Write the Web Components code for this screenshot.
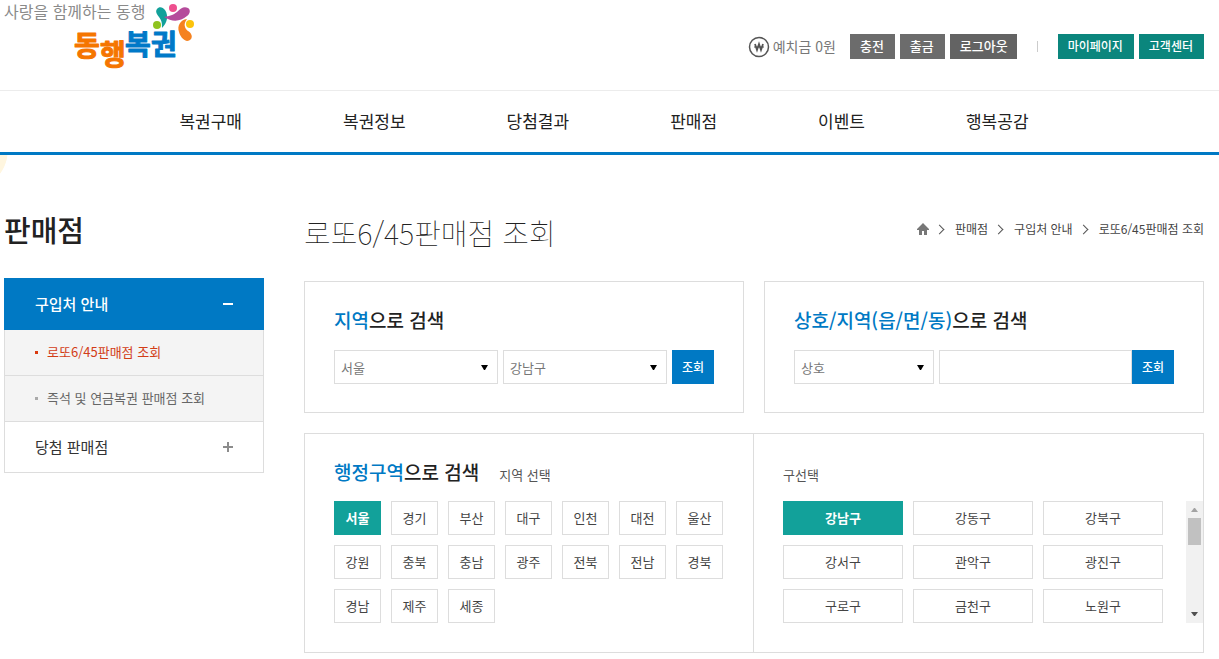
<!DOCTYPE html>
<html lang="ko">
<head>
<meta charset="utf-8">
<meta name="viewport" content="width=device-width, initial-scale=1">
<title>로또6/45판매점 조회 | 동행복권</title>
<style>
  body { margin: 0; background: #fff; color: #222; font-family: "Noto Sans CJK KR", "Noto Sans", sans-serif; font-size: 13px; }
</style>
</head>
<body>
<lottery-page></lottery-page>
<script>
const define = (name, html, setup) => {
  const template = document.createElement('template');
  template.innerHTML = `<style>
    :host { display: block; }
    *, ::before, ::after { box-sizing: border-box; }
    button, input, select { font: inherit; margin: 0; border-radius: 0; }
    button { cursor: pointer; padding: 0 0 2px; }
    a { color: inherit; text-decoration: none; }
    h1, h2, h3, ul, ol { margin: 0; padding: 0; list-style: none; font-weight: 400; }
    svg { display: block; }
  </style>` + html;
  customElements.define(name, class extends HTMLElement {
    constructor() {
      super();
      this.attachShadow({ mode: 'open' }).append(template.content.cloneNode(true));
    }
    connectedCallback() { if (setup) setup(this, this.shadowRoot); }
  });
};

define('site-logo', `
<style>
  :host { width: 200px; }
  a { display: block; }
  text { font-family: "Noto Sans CJK KR", sans-serif; }
  .mark { font-size: 28px; font-weight: 700; stroke-width: 1; stroke-linejoin: round; }
</style>
<a href="#" aria-label="사랑을 함께하는 동행 동행복권">
  <svg width="200" height="76" viewBox="0 0 200 76">
    <text x="0" y="18" font-size="16" fill="#8a8a8a">사랑을 함께하는 동행</text>
    <text class="mark" y="56" fill="#f57500" stroke="#f57500"><tspan x="70">동</tspan><tspan x="96" y="65">행</tspan></text>
    <text class="mark" y="55" fill="#0079c8" stroke="#0079c8" x="121 147">복권</text>
    <circle cx="153" cy="25" r="4" fill="#8fc31f"/>
    <path d="M153 9c2-3 6-2 8 1 4 6 2 13-3 18 0-5 0-7-3-11-2-3-4-5-2-8z" fill="#12a19a"/>
    <circle cx="169" cy="8" r="4" fill="#ee4f8e"/>
    <path d="M160 17c6-1 9-2 13-5 4-4 7-6 11-4 3 2 2 6-1 8-7 6-15 6-23 1z" fill="#b54b9b"/>
    <circle cx="186" cy="24" r="4" fill="#fcc30b"/>
    <path d="M183 19c-7 1-10 7-8 13 1 4 4 8 8 9 4 0 6-4 4-7-1-3-5-3-6-7-1-3 0-5 2-8z" fill="#f58220"/>
  </svg>
</a>`);

define('util-bar', `
<style>
  :host { display: flex; align-items: center; }
  .balance { display: flex; align-items: center; gap: 3px; margin-right: 14px; font-size: 14px; line-height: 20px; color: #777; }
  .balance span { padding-bottom: 2px; }
  .group { display: flex; gap: 5px; }
  a.btn { display: block; padding: 0 11px 2px 10px; line-height: 23px; font-size: 13px; font-weight: 500; color: #fff; background: #6c6c6c; white-space: nowrap; }
  a.dark { background: #636363; padding: 0 9px 2px 10px; }
  .teal a.btn { background: #0b867d; font-size: 12px; }
  .bar { width: 1px; height: 11px; background: #ccc; margin: 0 20px; }
</style>
<div class="balance">
  <svg width="22" height="22" viewBox="0 0 22 22" fill="none" stroke="#555"><circle cx="11" cy="11" r="9.5" stroke-width="1.5"/><path d="M7 8l2 6 2-6 2 6 2-6" stroke-width="1.8"/><path d="M6 11h10"/></svg>
  <span>예치금 0원</span>
</div>
<div class="group"><a class="btn" href="#">충전</a><a class="btn" href="#">출금</a><a class="btn dark" href="#">로그아웃</a></div>
<span class="bar"></span>
<div class="group teal"><a class="btn" href="#">마이페이지</a><a class="btn" href="#">고객센터</a></div>`);

define('site-header', `
<style>
  .top { display: flex; justify-content: space-between; align-items: flex-start; height: 90px; padding: 0 15px 0 4px; }
  util-bar { margin-top: 34px; }
  nav { border-top: 1px solid #ececec; border-bottom: 3px solid #0079c4; }
  ul { display: flex; justify-content: center; gap: 101px; padding-right: 11px; }
  a { display: block; font-size: 17px; line-height: 60px; padding-bottom: 1px; color: #222; white-space: nowrap; }
</style>
<header>
  <div class="top"><site-logo></site-logo><util-bar></util-bar></div>
  <nav aria-label="주 메뉴"><ul>
    <li><a href="#">복권구매</a></li><li><a href="#">복권정보</a></li><li><a href="#">당첨결과</a></li>
    <li><a href="#">판매점</a></li><li><a href="#">이벤트</a></li><li><a href="#">행복공감</a></li>
  </ul></nav>
</header>`);

define('side-menu', `
<style>
  :host { width: 260px; flex: none; }
  h2 { font-size: 29px; font-weight: 500; line-height: 38px; margin: 0 0 30px; color: #222; }
  .top { display: flex; justify-content: space-between; align-items: center; height: 52px; padding: 0 31px; font-size: 15px; }
  .top span, .sub span { padding-bottom: 2px; }
  .open { background: #0079c4; color: #fff; font-weight: 500; }
  .closed { height: 51px; padding: 0 30px; border: 1px solid #ddd; border-top: 0; color: #333; }
  .sub a { display: flex; align-items: center; gap: 9px; height: 46px; padding: 0 30px; border: 1px solid #ddd; border-top: 0; background: #f4f4f4; color: #666; }
  .sub a::before { content: ""; width: 3px; height: 3px; background: #aaa; }
  .sub a[aria-current] { color: #d23d17; }
  .sub a[aria-current]::before { background: #d93a0e; }
</style>
<nav aria-label="판매점 메뉴">
  <h2>판매점</h2>
  <a class="top open" href="#"><span>구입처 안내</span><svg width="10" height="10"><path d="M0 5h10" stroke="#fff" stroke-width="2"/></svg></a>
  <ul class="sub"><li><a href="#" aria-current="page"><span>로또6/45판매점 조회</span></a></li><li><a href="#"><span>즉석 및 연금복권 판매점 조회</span></a></li></ul>
  <a class="top closed" href="#"><span>당첨 판매점</span><svg width="10" height="10"><path d="M0 5h10M5 0v10" stroke="#8c8c8c" stroke-width="2"/></svg></a>
</nav>`);

define('bread-crumb', `
<style>
  ol { display: flex; align-items: center; font-size: 12px; line-height: 38px; color: #444; }
  li { display: flex; align-items: center; white-space: nowrap; }
  li + li::before { content: ""; width: 7px; height: 7px; border: solid #555; border-width: 1px 1px 0 0; transform: rotate(45deg); margin: 0 12px 0 7px; }
</style>
<nav aria-label="현재 위치"><ol>
  <li><a href="#" aria-label="홈"><svg width="12" height="12" viewBox="0 0 12 12"><path d="M6 0l6 6v1h-2v5H7V8H5v4H2V7H0V6z" fill="#777"/></svg></a></li>
  <li><a href="#">판매점</a></li><li><a href="#">구입처 안내</a></li><li><a href="#" aria-current="page">로또6/45판매점 조회</a></li>
</ol></nav>`);

define('drop-down', `
<style>
  :host { display: grid; height: 34px; min-width: 0; }
  select { grid-area: 1 / 1; width: 100%; height: 34px; padding: 0 6px; border: 1px solid #ddd; background: #fff; color: #777; appearance: none; }
  svg { grid-area: 1 / 1; justify-self: end; align-self: center; margin-right: 10px; pointer-events: none; }
</style>
<select><option></option></select>
<svg width="7" height="5" viewBox="0 0 7 5"><path d="M0 0h7L4 5H3z" fill="#000"/></svg>`,
(host, root) => {
  root.querySelector('select').setAttribute('aria-label', host.getAttribute('label'));
  root.querySelector('option').textContent = host.getAttribute('value');
});

define('search-card', `
<style>
  :host { border: 1px solid #ddd; padding: 24px 29px 28px; box-sizing: border-box; }
  h3 { font-size: 19px; font-weight: 500; line-height: 28px; margin-bottom: 16px; color: #222; }
  .accent { color: #0079c4; }
  form { display: flex; gap: 5px; }
  .go { flex: none; width: 42px; height: 34px; border: 0; background: #0079c4; color: #fff; font-size: 12px; font-weight: 500; }
</style>
<h3><span class="accent"><slot name="accent"></slot></span><slot name="rest"></slot></h3>
<form><slot></slot><button class="go" type="button">조회</button></form>`);

define('keyword-box', `
<style>
  :host { flex: 1; min-width: 0; margin-right: -5px; }
  input { display: block; width: 100%; height: 34px; padding: 0 8px; border: 1px solid #ddd; background: #fff; outline: 0; }
</style>
<input type="text" aria-label="상호 또는 지역 검색어">`);

define('choice-grid', `
<style>
  :host { flex: 1; min-width: 0; }
  div { display: grid; gap: 10px; grid-template-columns: repeat(var(--columns, 3), minmax(0, 1fr)); }
  button { height: 34px; border: 1px solid #ddd; background: #fff; color: #444; font-size: 13px; }
  button[aria-pressed=true] { border-color: #12a19a; background: #12a19a; color: #fff; font-weight: 700; }
</style>
<div role="group"></div>`,
(host, root) => {
  const group = root.querySelector('div');
  group.setAttribute('aria-label', host.getAttribute('label'));
  group.replaceChildren(...host.getAttribute('items').split(' ').map((name, i) => {
    const button = document.createElement('button');
    button.type = 'button';
    button.textContent = name;
    button.setAttribute('aria-pressed', i === 0);
    button.onclick = () => group.querySelectorAll('button').forEach(b => b.setAttribute('aria-pressed', b === button));
    return button;
  }));
});

define('scroll-rail', `
<style>
  :host { display: flex; flex-direction: column; align-items: center; width: 17px; flex: none; background: #f1f1f1; box-sizing: border-box; padding: 7px 0; }
  .thumb { width: 13px; height: 27px; background: #c1c1c1; margin-top: 6px; }
  .down { margin-top: auto; }
</style>
<svg width="7" height="4"><path d="M0 4l3-4h1l3 4z" fill="#a3a3a3"/></svg>
<span class="thumb"></span>
<svg class="down" width="7" height="4"><path d="M0 0h7L4 4H3z" fill="#505050"/></svg>`);

define('area-panel', `
<style>
  :host { display: grid; grid-template-columns: minmax(0, 1fr) minmax(0, 1fr); border: 1px solid #ddd; box-sizing: border-box; }
  section { padding: 24px 30px 29px 29px; }
  .region { border-right: 1px solid #ddd; --columns: 7; }
  .district { padding-right: 0; }
  .head { display: flex; align-items: baseline; gap: 20px; height: 43px; }
  h3 { font-size: 19px; font-weight: 500; line-height: 28px; color: #222; }
  .accent { color: #0079c4; }
  .note { font-size: 13px; line-height: 34px; color: #555; }
  .row { display: flex; gap: 23px; }
</style>
<section class="region">
  <div class="head"><h3><span class="accent">행정구역</span>으로 검색</h3><span class="note">지역 선택</span></div>
  <choice-grid label="지역 선택" items="서울 경기 부산 대구 인천 대전 울산 강원 충북 충남 광주 전북 전남 경북 경남 제주 세종"></choice-grid>
</section>
<section class="district">
  <div class="head"><span class="note">구선택</span></div>
  <div class="row"><choice-grid label="구선택" items="강남구 강동구 강북구 강서구 관악구 광진구 구로구 금천구 노원구"></choice-grid><scroll-rail></scroll-rail></div>
</section>`);

define('lottery-page', `
<style>
  .body { display: flex; gap: 40px; padding: 55px 15px 6px 4px; background: radial-gradient(circle 38px at -30px -4px, #fff6df 98%, transparent 100%) no-repeat; }
  main { flex: 1; min-width: 0; }
  .title { display: flex; justify-content: space-between; align-items: flex-start; height: 71px; }
  h1 { font-size: 29px; font-weight: 100; line-height: 44px; color: #222; white-space: nowrap; }
  .cards { display: grid; grid-template-columns: minmax(0, 1fr) minmax(0, 1fr); gap: 20px; margin-bottom: 20px; }
  .wide { flex: 1; }
  .kind { flex: none; width: 140px; }
</style>
<site-header></site-header>
<div class="body">
  <side-menu></side-menu>
  <main>
    <div class="title"><h1>로또6/45판매점 조회</h1><bread-crumb></bread-crumb></div>
    <div class="cards">
      <search-card><span slot="accent">지역</span><span slot="rest">으로 검색</span>
        <drop-down class="wide" label="시/도" value="서울"></drop-down><drop-down class="wide" label="구/군" value="강남구"></drop-down></search-card>
      <search-card><span slot="accent">상호/지역(읍/면/동)</span><span slot="rest">으로 검색</span>
        <drop-down class="kind" label="검색 구분" value="상호"></drop-down><keyword-box></keyword-box></search-card>
    </div>
    <area-panel></area-panel>
  </main>
</div>`);
</script>
</body>
</html>
